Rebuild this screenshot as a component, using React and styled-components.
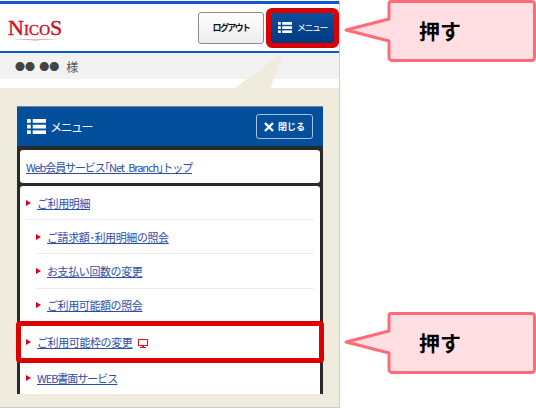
import styled, { createGlobalStyle } from "styled-components";

const GlobalStyle = createGlobalStyle`
  html, body {
    margin: 0;
    padding: 0;
    background: #fff;
  }

  body {
    font-family: "Noto Sans CJK JP", "Liberation Sans", sans-serif;
  }
`;

const Page = styled.div`
  position: relative;
  width: 536px;
  height: 408px;
  overflow: hidden;
`;

const Phone = styled.div`
  position: relative;
  box-sizing: border-box;
  width: 340px;
  height: 407px;
  margin-top: 1px;
  border-right: 1px solid #cfcfcf;
  border-bottom: 1px solid #cfcfcf;
  display: flex;
  flex-direction: column;
`;

const Header = styled.header`
  box-sizing: border-box;
  height: 52px;
  border-top: 3px solid #1257c9;
  border-bottom: 2px solid #1257c9;
  display: flex;
  align-items: center;
  padding: 0 5px 0 8px;
`;

const Logo = styled.div`
  flex-grow: 1;
  color: #d0101c;
  font-family: "Liberation Serif", serif;
  font-size: 22px;
  line-height: 21px;
  font-variant: small-caps;
  letter-spacing: 0.1px;
  -webkit-text-stroke: 0.4px #d0101c;
  margin-top: 2px;

  svg {
    display: block;
  }
`;

const LogoutButton = styled.div`
  box-sizing: border-box;
  width: 66px;
  height: 32px;
  margin-right: 7px;
  border: 1px solid #8c8c8c;
  border-radius: 3px;
  background: linear-gradient(#ffffff, #ececec);
  color: #111;
  font-size: 9px;
  font-weight: 700;
  letter-spacing: -1.6px;
  display: flex;
  align-items: center;
  justify-content: center;
`;

const MenuButton = styled.div`
  box-sizing: border-box;
  width: 63px;
  height: 30px;
  outline: 5px solid #dc0000;
  border-radius: 1px;
  background: linear-gradient(#0c4f9c, #023a80);
  color: #fff;
  font-size: 9px;
  letter-spacing: -1.5px;
  display: flex;
  align-items: center;
  justify-content: center;
  gap: 5px;
`;

const Greeting = styled.div`
  box-sizing: border-box;
  height: 26px;
  background: #f2f2f2;
  color: #555;
  font-size: 12px;
  padding-left: 15px;
  display: flex;
  align-items: center;
  gap: 7px;
`;

const Dots = styled.span`
  color: #444;
  font-size: 10px;
  word-spacing: 2px;
`;

const Spacer = styled.div`
  height: 9px;
`;

const Wedge = styled.svg`
  position: absolute;
  left: 232px;
  top: 49px;
`;

const Body = styled.main`
  flex-grow: 1;
  background: #efebdd;
  padding: 18px 16px 0 17px;
`;

const Panel = styled.section`
  box-sizing: border-box;
  height: 288px;
  background: #2a2a2a;
  border: solid #2a2a2a;
  border-width: 0 3px;
  display: flex;
  flex-direction: column;
`;

const PanelHeader = styled.div`
  box-sizing: border-box;
  height: 40px;
  margin: 0 -3px;
  padding: 0 10px 0 10px;
  background: #034f9c;
  border-top: 1px solid #77838f;
  color: #fff;
  font-size: 12px;
  display: flex;
  align-items: center;
  gap: 4px;
`;

const PanelTitle = styled.span`
  flex-grow: 1;
  letter-spacing: -1.5px;
`;

const CloseButton = styled.div`
  box-sizing: border-box;
  width: 57px;
  height: 25px;
  border: 1px solid #a9c1de;
  border-radius: 3px;
  font-size: 9px;
  font-weight: 700;
  display: flex;
  align-items: center;
  justify-content: center;
  gap: 4px;
`;

const TopLink = styled.div`
  box-sizing: border-box;
  height: 33px;
  margin-top: 4px;
  padding-left: 6px;
  background: #fff;
  border-radius: 3px;
  display: flex;
  align-items: center;
`;

const List = styled.ul`
  flex-grow: 1;
  margin: 3px 0 0;
  padding: 0 6px;
  list-style: none;
  background: #fff;
  border-radius: 3px 3px 0 0;
`;

const Item = styled.li`
  position: relative;
  box-sizing: border-box;
  height: ${(p) => p.$height}px;
  margin-left: ${(p) => (p.$sub ? 10 : 0)}px;
  border-bottom: ${(p) => (p.$line ? "1px solid #ebebeb" : "none")};
  display: flex;
  align-items: center;
  gap: 6px;
`;

const Arrow = styled.span`
  width: 0;
  height: 0;
  border-left: 5px solid #e3001b;
  border-top: 3.5px solid transparent;
  border-bottom: 3.5px solid transparent;
`;

const ItemLink = styled.a`
  color: #2b4ea8;
  font-size: 11px;
  text-decoration: underline;
  white-space: nowrap;
  word-spacing: 3px;
  letter-spacing: ${(p) => p.$spacing ?? -0.4}px;
`;

const Highlight = styled.div`
  position: absolute;
  left: -10px;
  right: -10px;
  top: 0;
  bottom: 0;
  border: 5px solid #dc0000;
  border-radius: 4px;
`;

const MonitorIcon = styled.svg`
  position: absolute;
  left: 112px;
  top: 18px;
  fill: #e8101c;
`;

const Callout = styled.div`
  position: absolute;
  left: 344px;
  top: ${(p) => p.$top}px;
  width: 192px;
  height: 62px;

  svg {
    display: block;
  }
`;

const CalloutText = styled.span`
  position: absolute;
  left: 75px;
  top: 15px;
  font-size: 21px;
  line-height: 30px;
  font-weight: 700;
  color: #000;
`;

const ListIcon = ({ size }) => (
  <svg width={size} height={size * 0.8} viewBox="0 0 20 16" fill="#fff">
    <rect x="0" y="0" width="4" height="4" />
    <rect x="0" y="6" width="4" height="4" />
    <rect x="0" y="12" width="4" height="4" />
    <rect x="6" y="0" width="14" height="4" />
    <rect x="6" y="6" width="14" height="4" />
    <rect x="6" y="12" width="14" height="4" />
  </svg>
);

const CalloutShape = () => (
  <svg width="192" height="62" viewBox="0 0 192 62">
    <path
      d="M46 1.5 H188 a2.5 2.5 0 0 1 2.5 2.5 V58 a2.5 2.5 0 0 1 -2.5 2.5 H48 a3 3 0 0 1 -3 -3 V41 L2 30 L45 19 V4 a2.5 2.5 0 0 1 1 -2.5 Z"
      fill="#ffdfe1"
      stroke="#ff6b78"
      strokeWidth="3"
      strokeLinejoin="round"
    />
  </svg>
);

const items = [
  { label: "ご利用明細", height: 34, line: true },
  { label: "ご請求額･利用明細の照会", height: 34, line: true, sub: true },
  { label: "お支払い回数の変更", height: 35, line: true, sub: true },
  { label: "ご利用可能額の照会", height: 32, sub: true },
];

export default function App() {
  return (
    <Page>
      <GlobalStyle />
      <Phone>
        <Header>
          <Logo>
            NicoS
            <svg width="54" height="3" viewBox="0 0 54 3">
              <path d="M0 0.5 Q27 3 54 0.5 Q27 4 0 0.5 Z" fill="#d0101c" />
            </svg>
          </Logo>
          <LogoutButton>ログアウト</LogoutButton>
          <MenuButton>
            <ListIcon size={14} />
            メニュー
          </MenuButton>
        </Header>
        <Greeting>
          <Dots>●● ●●</Dots>様
        </Greeting>
        <Spacer />
        <Wedge width="52" height="40" viewBox="0 0 52 40">
          <polygon points="51,3 0,40 38,40" fill="#efebdd" />
        </Wedge>
        <Body>
          <Panel>
            <PanelHeader>
              <ListIcon size={19} />
              <PanelTitle>メニュー</PanelTitle>
              <CloseButton>
                <svg width="10" height="10" viewBox="0 0 10 10">
                  <path d="M1 1 L9 9 M9 1 L1 9" stroke="#fff" strokeWidth="2.4" />
                </svg>
                閉じる
              </CloseButton>
            </PanelHeader>
            <TopLink>
              <ItemLink $spacing={-1.1}>Web会員サービス｢Net Branch｣トップ</ItemLink>
            </TopLink>
            <List>
              {items.map((item) => (
                <Item key={item.label} $height={item.height} $line={item.line} $sub={item.sub}>
                  <Arrow />
                  <ItemLink>{item.label}</ItemLink>
                </Item>
              ))}
              <Item $height={42}>
                <Highlight />
                <Arrow />
                <ItemLink>ご利用可能枠の変更</ItemLink>
                <MonitorIcon width="10" height="9" viewBox="0 0 10 9">
                  <path fillRule="evenodd" d="M0 0 H10 V7 H6 V8 H8 V9 H2 V8 H4 V7 H0 Z M1 1 V6 H9 V1 Z" />
                </MonitorIcon>
              </Item>
              <Item $height={30}>
                <Arrow />
                <ItemLink $spacing={-1}>WEB書面サービス</ItemLink>
              </Item>
            </List>
          </Panel>
        </Body>
      </Phone>
      <Callout $top={0}>
        <CalloutShape />
        <CalloutText>押す</CalloutText>
      </Callout>
      <Callout $top={312}>
        <CalloutShape />
        <CalloutText>押す</CalloutText>
      </Callout>
    </Page>
  );
}
